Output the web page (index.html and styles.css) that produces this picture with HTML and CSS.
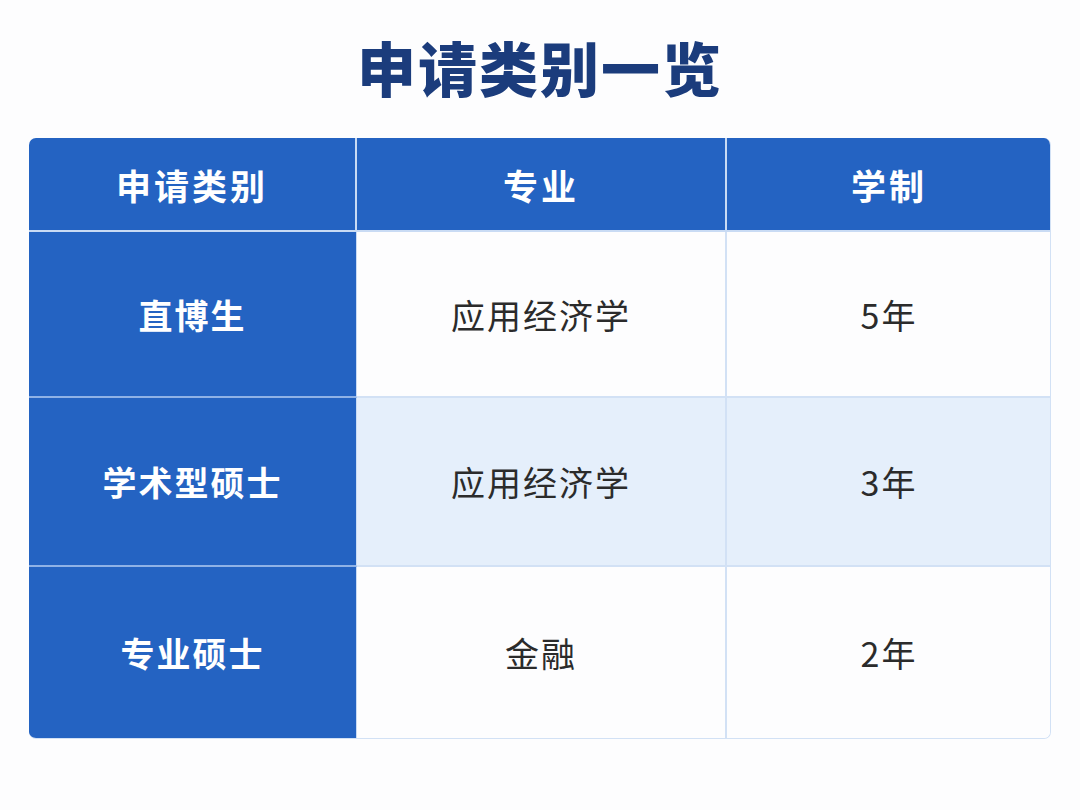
FILE: index.html
```html
<!DOCTYPE html>
<html lang="zh">
<head>
<meta charset="utf-8">
<link rel="stylesheet" href="styles.css">
</head>
<body>
<div class="page">
  <h1 class="title">申请类别一览</h1>
  <div class="table">
    <div class="cell head first">申请类别</div>
    <div class="cell head">专业</div>
    <div class="cell head last">学制</div>

    <div class="cell side">直博生</div>
    <div class="cell body">应用经济学</div>
    <div class="cell body last">5年</div>

    <div class="cell side">学术型硕士</div>
    <div class="cell body alt">应用经济学</div>
    <div class="cell body alt last">3年</div>

    <div class="cell side bottom">专业硕士</div>
    <div class="cell body bottom">金融</div>
    <div class="cell body bottom last">2年</div>
  </div>
</div>
</body>
</html>
```

FILE: styles.css
```css
* { box-sizing: border-box; margin: 0; padding: 0; }
html, body { background: #fdfdfe; }
body {
  width: 1080px;
  height: 810px;
  font-family: "Noto Sans CJK SC", "Noto Sans", sans-serif;
}
.page {
  padding: 29px 29px 0 29px;
  display: flex;
  flex-direction: column;
  align-items: center;
}
.title {
  font-size: 59px;
  font-weight: 900;
  color: #1b3c7c;
  letter-spacing: 2px;
  line-height: 76px;
  height: 109px;
  text-align: center;
}
.table {
  width: 1022px;
  display: grid;
  grid-template-columns: 328px 370px 324px;
  grid-template-rows: 94px 166px 169px 171px;
  border-radius: 7px;
  overflow: hidden;
  border: 1px solid #d2e1f5;
  border-left: none;
  border-top: none;
}
.cell {
  display: flex;
  align-items: center;
  justify-content: center;
  font-size: 34px;
  letter-spacing: 2px;
}
.head {
  background: #2463c2;
  color: #ffffff;
  font-weight: 700;
  font-size: 35px;
  letter-spacing: 3px;
  border-right: 2px solid #c9dbf4;
  border-bottom: 2px solid #c9dbf4;
}
.head.last { border-right: none; }
.side {
  background: #2463c2;
  color: #ffffff;
  font-weight: 700;
  border-bottom: 2px solid #8fb2e6;
  border-right: 1px solid #c9dbf4;
}
.side.bottom { border-bottom: none; }
.body {
  background: #fdfdfe;
  color: #2b2b2b;
  font-weight: 400;
  border-right: 2px solid #d2e1f5;
  border-bottom: 2px solid #d2e1f5;
}
.body.last { border-right: none; }
.body.bottom { border-bottom: none; }
.body.alt { background: #e5effb; }
```
